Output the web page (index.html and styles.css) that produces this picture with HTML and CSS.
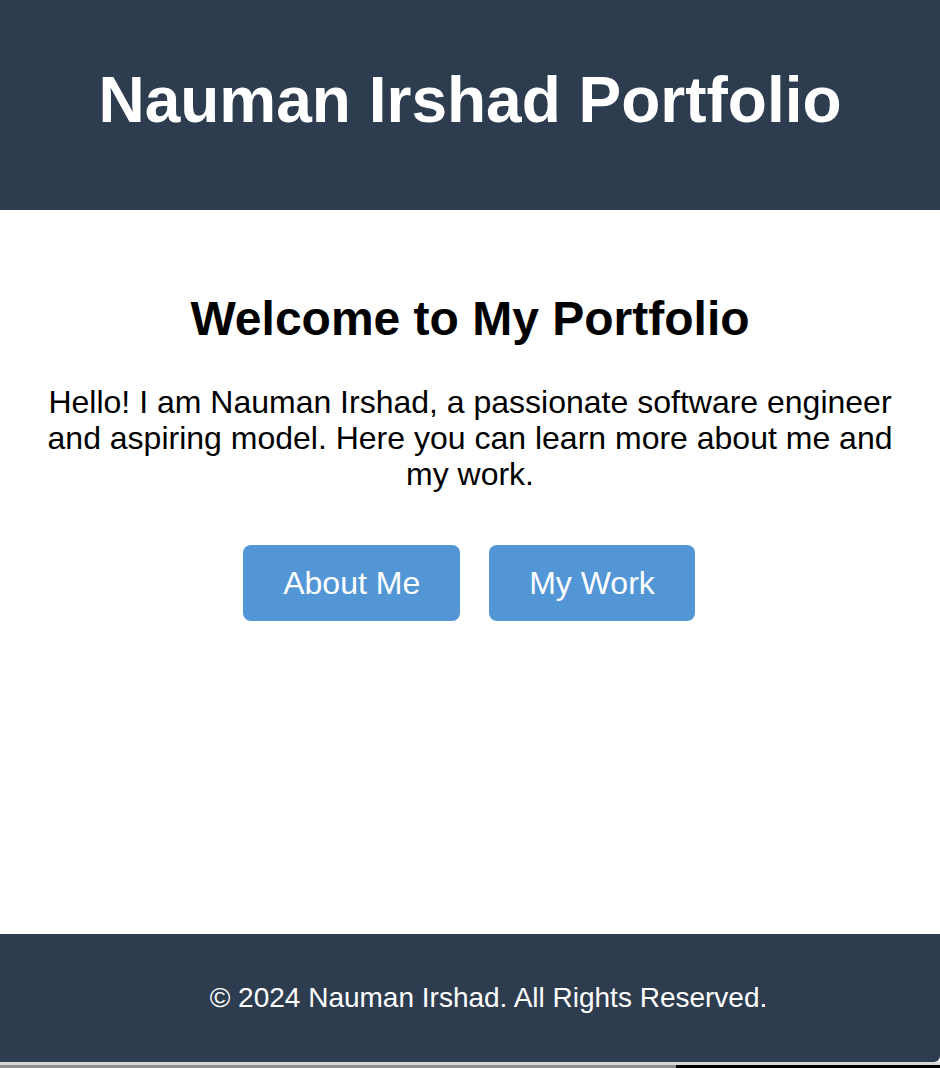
FILE: index.html
```html
<!DOCTYPE html>
<html lang="en">
<head>
<meta charset="utf-8">
<title>Nauman Irshad Portfolio</title>
<link rel="stylesheet" href="styles.css">
</head>
<body>
<div class="page">
  <header class="site-header">
    <h1 class="site-title">Nauman Irshad Portfolio</h1>
  </header>
  <main class="hero">
    <h2 class="hero-title">Welcome to My Portfolio</h2>
    <p class="hero-text">Hello! I am Nauman Irshad, a passionate software engineer and aspiring model. Here you can learn more about me and my work.</p>
    <div class="actions">
      <a class="btn" href="#about">About Me</a>
      <a class="btn" href="#work">My Work</a>
    </div>
  </main>
  <footer class="site-footer">
    <p class="footer-text">© 2024 Nauman Irshad. All Rights Reserved.</p>
  </footer>
  <div class="window-edge">
    <div class="edge-top"></div>
    <div class="edge-bottom">
      <div class="edge-left"></div>
      <div class="edge-right"></div>
    </div>
  </div>
</div>
</body>
</html>
```

FILE: styles.css
```css
* {
  box-sizing: border-box;
}

html, body {
  margin: 0;
  padding: 0;
}

body {
  font-family: "Liberation Sans", Arial, Helvetica, sans-serif;
  background: #ffffff;
  color: #000000;
}

.page {
  display: flex;
  flex-direction: column;
  min-height: 1068px;
}

.site-header {
  background: #2e3c4f;
  color: #ffffff;
  text-align: center;
  padding: 63px 0 73px;
}

.site-title {
  margin: 0;
  font-size: 64px;
  line-height: 74px;
  font-weight: bold;
}

.hero {
  flex: 1;
  text-align: center;
  padding: 81px 40px 0;
}

.hero-title {
  margin: 0;
  font-size: 48px;
  line-height: 55px;
  font-weight: bold;
}

.hero-text {
  margin: 38px 0 0;
  font-size: 32px;
  line-height: 36px;
}

.actions {
  display: flex;
  justify-content: center;
  gap: 29px;
  margin-top: 53px;
  padding-right: 2px;
}

.btn {
  display: block;
  background: #5296d6;
  color: #ffffff;
  text-decoration: none;
  font-size: 32px;
  line-height: 36px;
  padding: 20px 40px;
  border-radius: 8px;
}

.site-footer {
  background: #2e3c4f;
  color: #ffffff;
  text-align: center;
  padding: 20px 0 20px 37px;
  border-bottom-right-radius: 6px;
}

.footer-text {
  margin: 28px 0;
  font-size: 28px;
  line-height: 32px;
}

.window-edge {
  height: 6px;
  display: flex;
  flex-direction: column;
}

.edge-top {
  height: 3px;
  background: #d8d8d8;
}

.edge-bottom {
  height: 3px;
  display: flex;
}

.edge-left {
  width: 676px;
  background: #8e8e8e;
}

.edge-right {
  flex: 1;
  background: #000000;
}
```
